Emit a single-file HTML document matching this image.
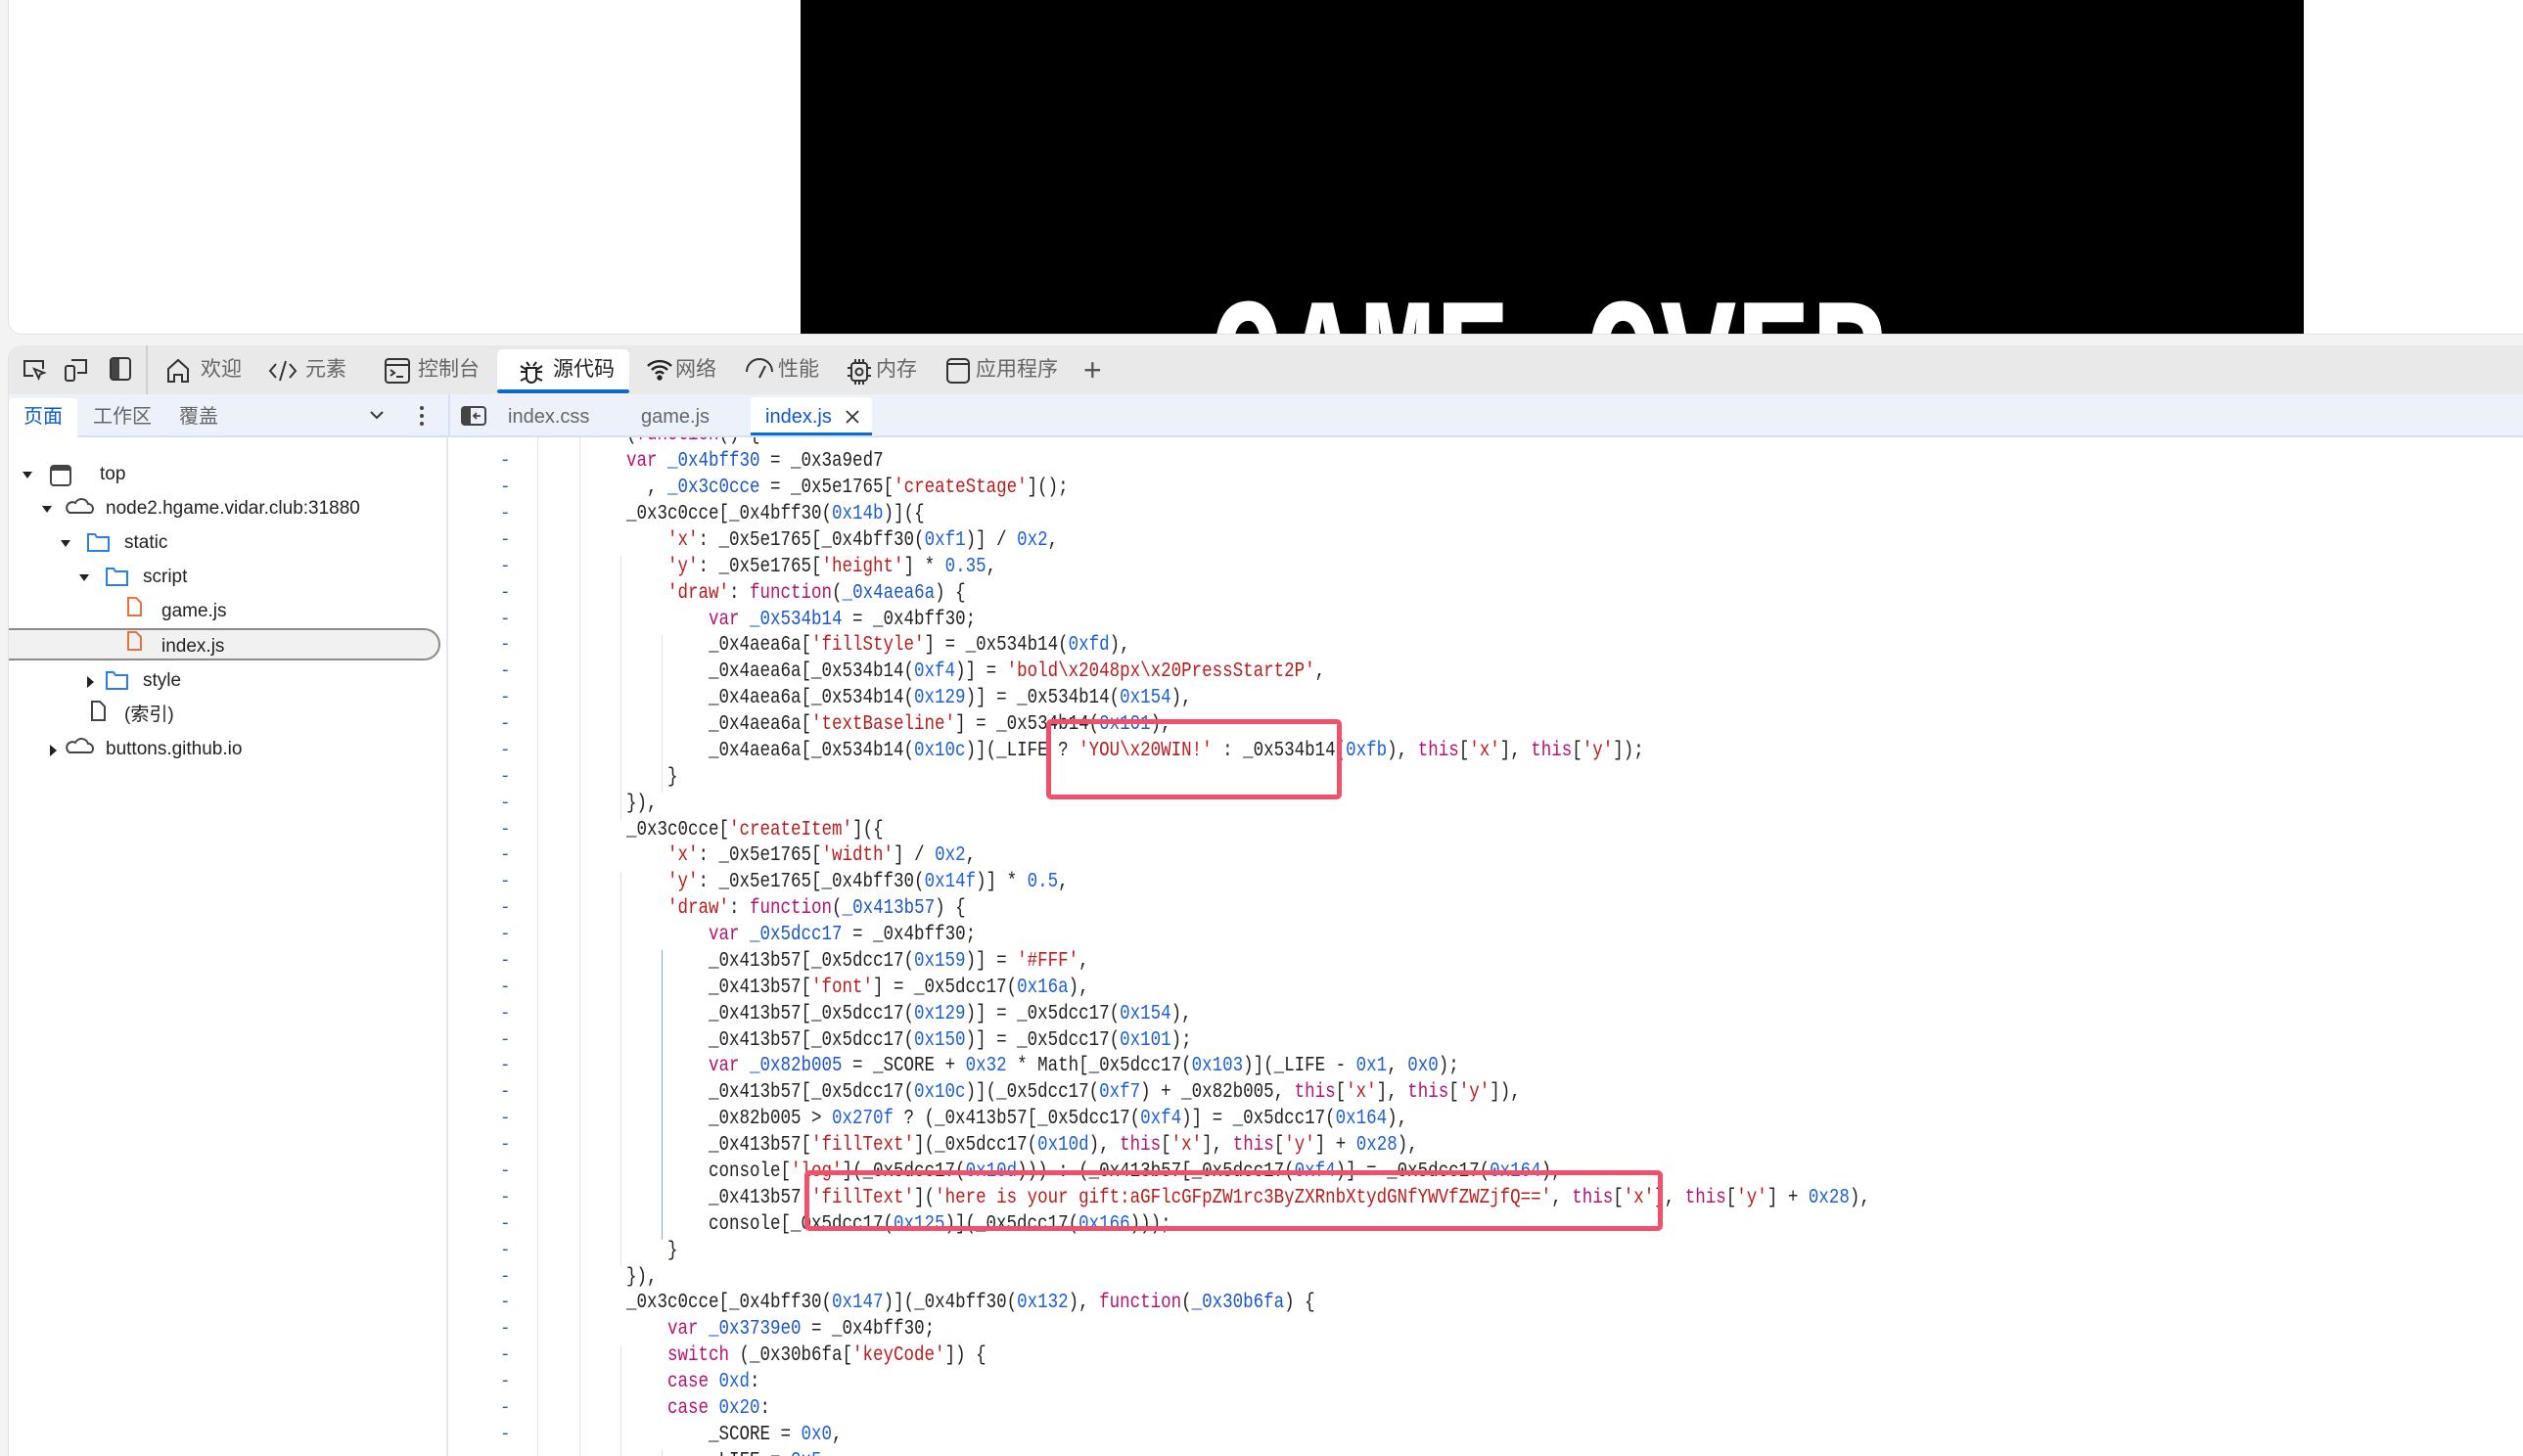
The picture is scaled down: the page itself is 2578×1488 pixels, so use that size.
<!DOCTYPE html>
<html><head><meta charset="utf-8">
<style>
*{box-sizing:border-box;margin:0;padding:0}
html,body{overflow:hidden}
body{width:2578px;height:1488px;overflow:hidden;background:#f3f3f3;position:relative;font-family:"Liberation Sans","Noto Sans CJK SC",sans-serif}
.page{position:absolute;left:8px;top:0;width:2570px;height:342px;background:#fff;border-bottom-left-radius:14px;border:1px solid #e2e2e2;border-top:none;border-right:none;overflow:hidden}
.game{position:absolute;left:809px;top:0;width:1536px;height:342px;background:#000;overflow:hidden}
.game span{position:absolute;left:418px;top:279px;font:bold 128px "Liberation Mono",monospace;color:#fff;letter-spacing:0px;transform:scaleY(1.4);transform-origin:top}
.dt{position:absolute;left:8px;top:353px;width:2570px;height:1135px;background:#fff;border-top-left-radius:14px;overflow:hidden;border-left:1px solid #e2e2e2}
.tb{position:absolute;left:0;top:0;width:100%;height:50px;background:#e9e9e9}
.ti{position:absolute;top:0;height:50px;line-height:50px;font-size:21px;color:#666;white-space:nowrap}
.ti svg{position:absolute;top:13px}
.row2{position:absolute;left:0;top:50px;width:100%;height:44px;background:#edf2fa;border-bottom:2px solid #d3e0f5}
.t2{position:absolute;top:0;height:44px;line-height:46px;font-size:20px;color:#666;white-space:nowrap}
.left{position:absolute;left:0;top:94px;width:449px;height:1041px;border-right:2px solid #e3e8f0;background:#fff;overflow:hidden}
.tr{position:absolute;font-size:19px;color:#222;white-space:nowrap;height:34px;line-height:34px}
.code{position:absolute;left:449px;top:94px;width:2121px;height:1041px;overflow:hidden;background:#fff}
.ln{position:absolute;left:0;width:100%;height:27px;line-height:27px;font:17.5px "Liberation Mono",monospace;color:#222;white-space:pre;margin-top:6px}
.ln b{font-weight:normal;position:absolute;top:0;transform:scaleY(1.22);margin-left:-6px}
.ln i{font-style:normal}
.k{color:#b3136e}.v{color:#1a55c9}.s{color:#b81c1c}.n{color:#1c5fd4}
.dash{position:absolute;left:53px;color:#1a55c9}
.g{position:absolute;width:1px;background:#dde3ec}
.box{position:absolute;border:5px solid #f0506a;border-radius:5px}
</style></head><body>
<div class="page"><div class="game"><span>GAME OVER</span></div></div>

<div class="dt">
 <div class="tb">
  <svg style="position:absolute;left:13px;top:13px" width="26" height="24" viewBox="0 0 26 24" fill="none" stroke="#333" stroke-width="2"><path d="M12 18H3V3h19v8"/><path d="M13 11l10 4-4 1.5-1.5 4z"/></svg>
  <svg style="position:absolute;left:56px;top:12px" width="26" height="26" viewBox="0 0 26 26" fill="none" stroke="#333" stroke-width="2"><rect x="2" y="9" width="9" height="15" rx="2"/><path d="M8 3h15v13h-9"/></svg>
  <svg style="position:absolute;left:103px;top:12px" width="22" height="24" viewBox="0 0 22 24"><rect x="1" y="1" width="20" height="22" rx="3" fill="none" stroke="#333" stroke-width="2"/><rect x="2" y="2" width="8" height="20" fill="#444"/></svg>
  <div style="position:absolute;left:140px;top:0;width:2px;height:50px;background:#d0d0d0"></div>
  <div class="ti" style="left:160px"><svg width="26" height="26" viewBox="0 0 26 26" fill="none" stroke="#333" stroke-width="2"><path d="M3 24V11L13 2l10 9v13h-6v-7h-8v7z"/></svg><span style="margin-left:36px">欢迎</span></div>
  <div class="ti" style="left:265px"><svg width="30" height="26" viewBox="0 0 30 26" fill="none" stroke="#333" stroke-width="2"><path d="M8 6l-6 7 6 7M22 6l6 7-6 7M18 3l-6 20"/></svg><span style="margin-left:38px">元素</span></div>
  <div class="ti" style="left:384px"><svg width="26" height="26" viewBox="0 0 26 26" fill="none" stroke="#333" stroke-width="2"><rect x="1" y="1" width="24" height="24" rx="3"/><path d="M1 7h24M6 12l4 3-4 3M12 19h7"/></svg><span style="margin-left:34px">控制台</span></div>
  <div style="position:absolute;left:499px;top:4px;width:135px;height:46px;background:#fff;border-radius:6px 6px 0 0"></div>
  <div style="position:absolute;left:499px;top:45px;width:135px;height:4px;background:#0b6bd3;border-radius:2px"></div>
  <div class="ti" style="left:520px;color:#222"><svg width="28" height="28" viewBox="0 0 28 28" fill="none" stroke="#222" stroke-width="2"><path d="M9 4l3 4M19 4l-3 4M9 10h10v10a5 5 0 0 1-10 0zM3 14h6M19 14h6M3 8l6 4M25 8l-6 4M3 23l6-3M25 23l-6-3"/></svg><span style="margin-left:36px">源代码</span></div>
  <div class="ti" style="left:651px"><svg width="28" height="24" viewBox="0 0 28 24" fill="none" stroke="#222" stroke-width="2.4"><path d="M2 8a17 17 0 0 1 24 0M6 12a11 11 0 0 1 16 0M10 16a5 5 0 0 1 8 0"/><circle cx="14" cy="20" r="1.5" fill="#222"/></svg><span style="margin-left:30px">网络</span></div>
  <div class="ti" style="left:752px"><svg width="30" height="26" viewBox="0 0 30 26" fill="none" stroke="#333" stroke-width="2"><path d="M2 14a13 13 0 0 1 26 0M15 20l6-12"/></svg><span style="margin-left:34px">性能</span></div>
  <div class="ti" style="left:856px"><svg width="26" height="28" viewBox="0 0 26 28" fill="none" stroke="#333" stroke-width="2"><rect x="5" y="5" width="16" height="18" rx="3"/><circle cx="13" cy="14" r="3.5"/><path d="M9 1v4M13 1v4M17 1v4M9 23v4M13 23v4M17 23v4M1 10h4M1 18h4M21 10h4M21 18h4"/></svg><span style="margin-left:30px">内存</span></div>
  <div class="ti" style="left:958px"><svg width="24" height="26" viewBox="0 0 24 26" fill="none" stroke="#333" stroke-width="2"><rect x="1" y="1" width="22" height="24" rx="4"/><path d="M1 6h22"/></svg><span style="margin-left:30px">应用程序</span></div>
  <div class="ti" style="left:1098px;font-size:32px;color:#555">+</div>
 </div>
 <div class="row2">
  <div style="position:absolute;left:0;top:4px;width:70px;height:40px;background:#fff;border-radius:4px 4px 0 0"></div>
  <div class="t2" style="left:15px;color:#0b57d0">页面</div>
  <div class="t2" style="left:86px">工作区</div>
  <div class="t2" style="left:174px">覆盖</div>
  <svg style="position:absolute;left:368px;top:16px" width="16" height="10" viewBox="0 0 16 10" fill="none" stroke="#333" stroke-width="2"><path d="M2 2l6 6 6-6"/></svg>
  <div style="position:absolute;left:420px;top:12px;width:4px;height:4px;border-radius:2px;background:#444;box-shadow:0 8px 0 #444,0 16px 0 #444"></div>
  <div style="position:absolute;left:449px;top:0;width:2px;height:42px;background:#d3e0f5"></div>
  <svg style="position:absolute;left:462px;top:12px" width="26" height="20" viewBox="0 0 26 20"><rect x="1" y="1" width="24" height="18" rx="3" fill="none" stroke="#444" stroke-width="2"/><rect x="2" y="2" width="8" height="16" fill="#444"/><path d="M20 10h-6M16 7l-3 3 3 3" fill="none" stroke="#444" stroke-width="1.8"/></svg>
  <div class="t2" style="left:510px">index.css</div>
  <div class="t2" style="left:646px">game.js</div>
  <div style="position:absolute;left:758px;top:3px;width:124px;height:39px;background:#fff;border-radius:4px 4px 0 0;border-bottom:3px solid #0b6bd3"></div>
  <div class="t2" style="left:773px;color:#0b57d0">index.js</div>
  <svg style="position:absolute;left:854px;top:15px" width="16" height="16" viewBox="0 0 16 16" stroke="#333" stroke-width="1.8"><path d="M2 2l12 12M14 2L2 14"/></svg>
 </div>

 <div class="left">
  <div style="position:absolute;left:-1px;top:195px;width:442px;height:33px;background:#f1f1f1;border:2px solid #8a8a8a;border-left:none;border-radius:0 17px 17px 0"></div>
  <svg width="450" height="400" style="position:absolute;left:0;top:0">
   <g fill="#222"><path d="M14 35l10 0-5 7z"/><path d="M34 70l10 0-5 7z"/><path d="M53 105l10 0-5 7z"/><path d="M72 140l10 0-5 7z"/><path d="M80 244l0 12 7-6z"/><path d="M42 314l0 12 7-6z"/></g>
   <g fill="none" stroke-width="2">
    <rect x="43" y="29" width="20" height="20" rx="3" stroke="#444"/><rect x="44" y="30" width="18" height="4" fill="#444" stroke="none"/>
    <path d="M62 77h22a5 5 0 0 0-3-9 7 7 0 0 0-13-1 5 5 0 0 0-6 10z" stroke="#444"/>
    <path d="M81 99h7l2 3h12v14H81z" stroke="#2b7de9"/>
    <path d="M100 134h7l2 3h12v14h-21z" stroke="#2b7de9"/>
    <path d="M122 164h8l5 5v13h-13z" stroke="#e8733a"/>
    <path d="M122 199h8l5 5v13h-13z" stroke="#e8733a"/>
    <path d="M100 240h7l2 3h12v14h-21z" stroke="#2b7de9"/>
    <path d="M85 270h8l5 5v14h-13z" stroke="#444"/>
    <path d="M62 322h22a5 5 0 0 0-3-9 7 7 0 0 0-13-1 5 5 0 0 0-6 10z" stroke="#444"/>
   </g>
  </svg>
  <div class="tr" style="left:93px;top:21px">top</div>
  <div class="tr" style="left:99px;top:56px">node2.hgame.vidar.club:31880</div>
  <div class="tr" style="left:118px;top:91px">static</div>
  <div class="tr" style="left:137px;top:126px">script</div>
  <div class="tr" style="left:156px;top:161px">game.js</div>
  <div class="tr" style="left:156px;top:197px">index.js</div>
  <div class="tr" style="left:137px;top:232px">style</div>
  <div class="tr" style="left:118px;top:267px">(索引)</div>
  <div class="tr" style="left:99px;top:302px">buttons.github.io</div>
 </div>

 <div class="code">
  <div class="g" style="left:91px;top:0;height:1041px"></div>
  <div class="g" style="left:134px;top:0;height:1041px"></div>
  <div class="g" style="left:176px;top:121px;height:270px"></div>
  <div class="g" style="left:218px;top:202px;height:161px"></div>
  <div class="g" style="left:176px;top:444px;height:403px"></div>
  <div class="g" style="left:218px;top:524px;height:296px;background:#7aa7e8"></div>
  <div class="g" style="left:176px;top:928px;height:113px"></div>
  <div class="g" style="left:218px;top:1035px;height:6px"></div>

<div class="ln" style="top:-18.7px"><b style="left:188px">(<i class="k">function</i>() {</b></div>
<div class="ln" style="top:8.2px"><span class="dash">-</span><b style="left:188px"><i class="k">var</i> <i class="v">_0x4bff30</i> = _0x3a9ed7</b></div>
<div class="ln" style="top:35.1px"><span class="dash">-</span><b style="left:209px">, <i class="v">_0x3c0cce</i> = _0x5e1765[<i class="s">'createStage'</i>]();</b></div>
<div class="ln" style="top:62px"><span class="dash">-</span><b style="left:188px">_0x3c0cce[_0x4bff30(<i class="n">0x14b</i>)]({</b></div>
<div class="ln" style="top:88.8px"><span class="dash">-</span><b style="left:230px"><i class="s">'x'</i>: _0x5e1765[_0x4bff30(<i class="n">0xf1</i>)] / <i class="n">0x2</i>,</b></div>
<div class="ln" style="top:115.7px"><span class="dash">-</span><b style="left:230px"><i class="s">'y'</i>: _0x5e1765[<i class="s">'height'</i>] * <i class="n">0.35</i>,</b></div>
<div class="ln" style="top:142.6px"><span class="dash">-</span><b style="left:230px"><i class="s">'draw'</i>: <i class="k">function</i>(<i class="v">_0x4aea6a</i>) {</b></div>
<div class="ln" style="top:169.5px"><span class="dash">-</span><b style="left:272px"><i class="k">var</i> <i class="v">_0x534b14</i> = _0x4bff30;</b></div>
<div class="ln" style="top:196.4px"><span class="dash">-</span><b style="left:272px">_0x4aea6a[<i class="s">'fillStyle'</i>] = _0x534b14(<i class="n">0xfd</i>),</b></div>
<div class="ln" style="top:223.2px"><span class="dash">-</span><b style="left:272px">_0x4aea6a[_0x534b14(<i class="n">0xf4</i>)] = <i class="s">'bold\x2048px\x20PressStart2P'</i>,</b></div>
<div class="ln" style="top:250.1px"><span class="dash">-</span><b style="left:272px">_0x4aea6a[_0x534b14(<i class="n">0x129</i>)] = _0x534b14(<i class="n">0x154</i>),</b></div>
<div class="ln" style="top:277px"><span class="dash">-</span><b style="left:272px">_0x4aea6a[<i class="s">'textBaseline'</i>] = _0x534b14(<i class="n">0x101</i>),</b></div>
<div class="ln" style="top:303.9px"><span class="dash">-</span><b style="left:272px">_0x4aea6a[_0x534b14(<i class="n">0x10c</i>)](_LIFE ? <i class="s">'YOU\x20WIN!'</i> : _0x534b14(<i class="n">0xfb</i>), <i class="k">this</i>[<i class="s">'x'</i>], <i class="k">this</i>[<i class="s">'y'</i>]);</b></div>
<div class="ln" style="top:330.8px"><span class="dash">-</span><b style="left:230px">}</b></div>
<div class="ln" style="top:357.6px"><span class="dash">-</span><b style="left:188px">}),</b></div>
<div class="ln" style="top:384.5px"><span class="dash">-</span><b style="left:188px">_0x3c0cce[<i class="s">'createItem'</i>]({</b></div>
<div class="ln" style="top:411.4px"><span class="dash">-</span><b style="left:230px"><i class="s">'x'</i>: _0x5e1765[<i class="s">'width'</i>] / <i class="n">0x2</i>,</b></div>
<div class="ln" style="top:438.3px"><span class="dash">-</span><b style="left:230px"><i class="s">'y'</i>: _0x5e1765[_0x4bff30(<i class="n">0x14f</i>)] * <i class="n">0.5</i>,</b></div>
<div class="ln" style="top:465.2px"><span class="dash">-</span><b style="left:230px"><i class="s">'draw'</i>: <i class="k">function</i>(<i class="v">_0x413b57</i>) {</b></div>
<div class="ln" style="top:492px"><span class="dash">-</span><b style="left:272px"><i class="k">var</i> <i class="v">_0x5dcc17</i> = _0x4bff30;</b></div>
<div class="ln" style="top:518.9px"><span class="dash">-</span><b style="left:272px">_0x413b57[_0x5dcc17(<i class="n">0x159</i>)] = <i class="s">'#FFF'</i>,</b></div>
<div class="ln" style="top:545.8px"><span class="dash">-</span><b style="left:272px">_0x413b57[<i class="s">'font'</i>] = _0x5dcc17(<i class="n">0x16a</i>),</b></div>
<div class="ln" style="top:572.7px"><span class="dash">-</span><b style="left:272px">_0x413b57[_0x5dcc17(<i class="n">0x129</i>)] = _0x5dcc17(<i class="n">0x154</i>),</b></div>
<div class="ln" style="top:599.6px"><span class="dash">-</span><b style="left:272px">_0x413b57[_0x5dcc17(<i class="n">0x150</i>)] = _0x5dcc17(<i class="n">0x101</i>);</b></div>
<div class="ln" style="top:626.4px"><span class="dash">-</span><b style="left:272px"><i class="k">var</i> <i class="v">_0x82b005</i> = _SCORE + <i class="n">0x32</i> * Math[_0x5dcc17(<i class="n">0x103</i>)](_LIFE - <i class="n">0x1</i>, <i class="n">0x0</i>);</b></div>
<div class="ln" style="top:653.3px"><span class="dash">-</span><b style="left:272px">_0x413b57[_0x5dcc17(<i class="n">0x10c</i>)](_0x5dcc17(<i class="n">0xf7</i>) + _0x82b005, <i class="k">this</i>[<i class="s">'x'</i>], <i class="k">this</i>[<i class="s">'y'</i>]),</b></div>
<div class="ln" style="top:680.2px"><span class="dash">-</span><b style="left:272px">_0x82b005 &gt; <i class="n">0x270f</i> ? (_0x413b57[_0x5dcc17(<i class="n">0xf4</i>)] = _0x5dcc17(<i class="n">0x164</i>),</b></div>
<div class="ln" style="top:707.1px"><span class="dash">-</span><b style="left:272px">_0x413b57[<i class="s">'fillText'</i>](_0x5dcc17(<i class="n">0x10d</i>), <i class="k">this</i>[<i class="s">'x'</i>], <i class="k">this</i>[<i class="s">'y'</i>] + <i class="n">0x28</i>),</b></div>
<div class="ln" style="top:734px"><span class="dash">-</span><b style="left:272px">console[<i class="s">'log'</i>](_0x5dcc17(<i class="n">0x10d</i>))) : (_0x413b57[_0x5dcc17(<i class="n">0xf4</i>)] = _0x5dcc17(<i class="n">0x164</i>),</b></div>
<div class="ln" style="top:760.8px"><span class="dash">-</span><b style="left:272px">_0x413b57[<i class="s">'fillText'</i>](<i class="s">'here is your gift:aGFlcGFpZW1rc3ByZXRnbXtydGNfYWVfZWZjfQ=='</i>, <i class="k">this</i>[<i class="s">'x'</i>], <i class="k">this</i>[<i class="s">'y'</i>] + <i class="n">0x28</i>),</b></div>
<div class="ln" style="top:787.7px"><span class="dash">-</span><b style="left:272px">console[_0x5dcc17(<i class="n">0x125</i>)](_0x5dcc17(<i class="n">0x166</i>)));</b></div>
<div class="ln" style="top:814.6px"><span class="dash">-</span><b style="left:230px">}</b></div>
<div class="ln" style="top:841.5px"><span class="dash">-</span><b style="left:188px">}),</b></div>
<div class="ln" style="top:868.4px"><span class="dash">-</span><b style="left:188px">_0x3c0cce[_0x4bff30(<i class="n">0x147</i>)](_0x4bff30(<i class="n">0x132</i>), <i class="k">function</i>(<i class="v">_0x30b6fa</i>) {</b></div>
<div class="ln" style="top:895.2px"><span class="dash">-</span><b style="left:230px"><i class="k">var</i> <i class="v">_0x3739e0</i> = _0x4bff30;</b></div>
<div class="ln" style="top:922.1px"><span class="dash">-</span><b style="left:230px"><i class="k">switch</i> (_0x30b6fa[<i class="s">'keyCode'</i>]) {</b></div>
<div class="ln" style="top:949px"><span class="dash">-</span><b style="left:230px"><i class="k">case</i> <i class="n">0xd</i>:</b></div>
<div class="ln" style="top:975.9px"><span class="dash">-</span><b style="left:230px"><i class="k">case</i> <i class="n">0x20</i>:</b></div>
<div class="ln" style="top:1002.8px"><span class="dash">-</span><b style="left:272px">_SCORE = <i class="n">0x0</i>,</b></div>
<div class="ln" style="top:1010px"><span class="dash" style="top:19.6px">-</span><b style="left:272px;top:19.6px">_LIFE = <i class="n">0x5</i>,</b></div>
 </div>
</div>
<div class="box" style="left:1069px;top:735px;width:302px;height:82px"></div>
<div class="box" style="left:822px;top:1196px;width:877px;height:62px"></div>
</body></html>
